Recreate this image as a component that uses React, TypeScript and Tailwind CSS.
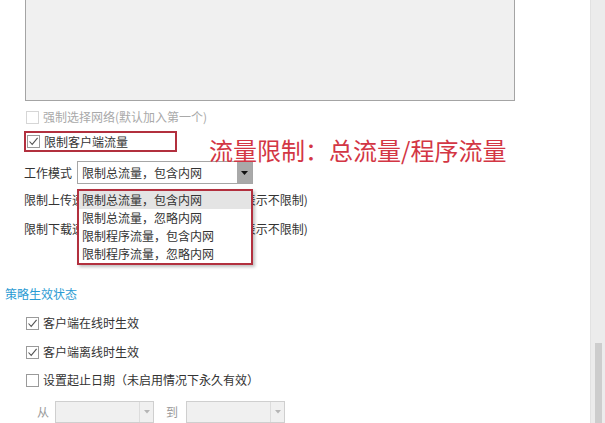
import React from 'react';

const font = { fontFamily: '"Noto Sans CJK SC", "Microsoft YaHei", sans-serif' };

function Check({ checked = false, disabled = false }: { checked?: boolean; disabled?: boolean }) {
  return (
    <span
      className={`flex h-[13px] w-[13px] shrink-0 items-center justify-center border bg-white ${
        disabled ? 'border-[#d6d6d6]' : 'border-[#9a9a9a]'
      }`}
    >
      {checked && (
        <svg width="11" height="11" viewBox="0 0 11 11">
          <path d="M1.5 5.5 L4.2 8.4 L9.6 1.8" fill="none" stroke="#555" strokeWidth="1.1" />
        </svg>
      )}
    </span>
  );
}

const options = ['限制总流量，包含内网', '限制总流量，忽略内网', '限制程序流量，包含内网', '限制程序流量，忽略内网'];

function DateSelect() {
  return (
    <div className="flex h-[22px] w-[99px] border border-[#cfcfcf] bg-[#f0f0f0]">
      <div className="flex-1" />
      <div className="flex w-[14px] items-center justify-center border-l border-[#dcdcdc]">
        <svg width="6" height="4" viewBox="0 0 6 4">
          <path d="M0 0 H6 L3 3.5 Z" fill="#b5b5b5" />
        </svg>
      </div>
    </div>
  );
}

export default function App() {
  return (
    <div className="relative flex h-[423px] w-[605px] overflow-hidden bg-white text-[12px] text-[#333]" style={font}>
      <div className="flex flex-1 flex-col">
        <div className="ml-[25px] h-[102px] w-[490px] border-x border-b border-[#a4a4a4] bg-[#f0f0f0]" />

        <div className="mt-[6px] flex h-[20px] items-center pl-[26px] text-[#a9a9a9]">
          <Check disabled />
          <span className="ml-[4px]">强制选择网络(默认加入第一个)</span>
        </div>

        <div className="ml-[24px] mt-[4px] flex h-[21px] w-[153px] items-center border-2 border-[#b2303e] pl-[1px]">
          <Check checked />
          <span className="ml-[4px]">限制客户端流量</span>
        </div>

        <div className="mt-[9px] flex h-[23px] items-center pl-[24px]">
          <span className="w-[53px]">工作模式</span>
          <div className="flex h-[23px] w-[176px] border border-[#a6a6a6] bg-white">
            <span className="flex-1 pl-[4px] leading-[21px]">限制总流量，包含内网</span>
            <div className="flex w-[15px] items-center justify-center bg-[#a9a9a9]">
              <svg width="7" height="4" viewBox="0 0 7 4">
                <path d="M0 0 H7 L3.5 4 Z" fill="#111" />
              </svg>
            </div>
          </div>
        </div>

        <div className="mt-[6px] flex h-[20px] items-center pl-[24px]">
          <span className="w-[72px]">限制上传速度</span>
          <span className="ml-[4px] h-[20px] w-[100px] border border-[#a6a6a6]" />
          <span className="ml-[4px]">KB/s</span>
          <span className="ml-[3px]">(0表示不限制)</span>
        </div>

        <div className="mt-[9px] flex h-[20px] items-center pl-[24px]">
          <span className="w-[72px]">限制下载速度</span>
          <span className="ml-[4px] h-[20px] w-[100px] border border-[#a6a6a6]" />
          <span className="ml-[4px]">KB/s</span>
          <span className="ml-[3px]">(0表示不限制)</span>
        </div>

        <div className="mt-[46px] flex h-[18px] items-center pl-[5px] text-[#2b9bd3]">策略生效状态</div>

        <div className="mt-[10px] flex h-[20px] items-center pl-[26px]">
          <Check checked />
          <span className="ml-[4px]">客户端在线时生效</span>
        </div>
        <div className="mt-[9px] flex h-[20px] items-center pl-[26px]">
          <Check checked />
          <span className="ml-[4px]">客户端离线时生效</span>
        </div>
        <div className="mt-[8px] flex h-[20px] items-center pl-[26px]">
          <Check />
          <span className="ml-[4px]">设置起止日期（未启用情况下永久有效）</span>
        </div>
        <div className="mt-[11px] flex items-center pl-[37px] text-[#9a9a9a]">
          <span className="w-[18px]">从</span>
          <DateSelect />
          <span className="ml-[12px] w-[20px]">到</span>
          <DateSelect />
        </div>
      </div>

      <div className="flex w-[15px] flex-col border-l border-[#e2e2e2] bg-[#ececec] pl-[4px] pr-[3px] pt-[343px]">
        <div className="flex-1 bg-[#cdcdcd]" />
      </div>

      <div className="absolute left-[209px] top-[134px] text-[24px] leading-[32px] text-[#d33644]">
        流量限制：总流量/程序流量
      </div>

      <div className="absolute left-[77px] top-[189px] w-[176px] border-2 border-[#b2303e] bg-white shadow-[2px_2px_3px_rgba(0,0,0,0.25)]">
        {options.map((o, i) => (
          <div key={o} className={`h-[18px] pl-[3px] leading-[17px] ${i === 0 ? 'bg-[#e4e4e4]' : ''}`}>
            {o}
          </div>
        ))}
      </div>
    </div>
  );
}
